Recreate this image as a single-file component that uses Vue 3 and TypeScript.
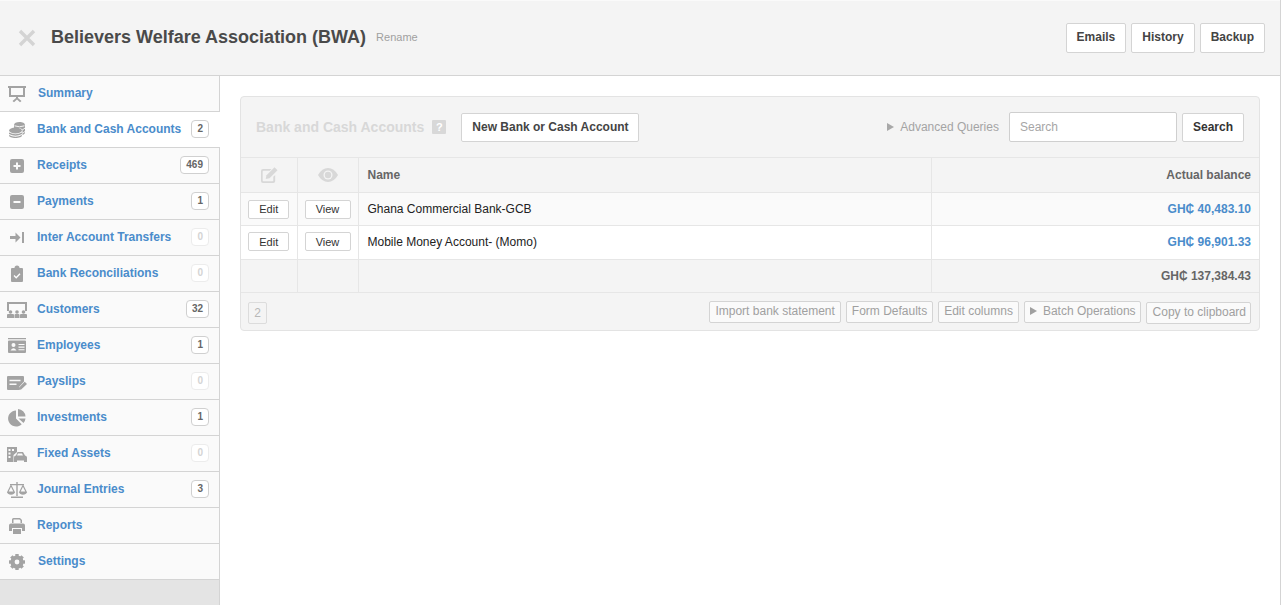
<script setup lang="ts">
interface NavItem { label: string; icon: string; count?: number; active?: boolean; x: number }
const nav: NavItem[] = [
  { label: 'Summary', icon: 'summary', x: 1 },
  { label: 'Bank and Cash Accounts', icon: 'coins', count: 2, active: true, x: 0 },
  { label: 'Receipts', icon: 'plus', count: 469, x: 0 },
  { label: 'Payments', icon: 'minus', count: 1, x: 0 },
  { label: 'Inter Account Transfers', icon: 'transfer', count: 0, x: 0 },
  { label: 'Bank Reconciliations', icon: 'clip', count: 0, x: 0 },
  { label: 'Customers', icon: 'customers', count: 32, x: 0 },
  { label: 'Employees', icon: 'card', count: 1, x: 0 },
  { label: 'Payslips', icon: 'payslip', count: 0, x: 0 },
  { label: 'Investments', icon: 'pie', count: 1, x: 0 },
  { label: 'Fixed Assets', icon: 'assets', count: 0, x: 0 },
  { label: 'Journal Entries', icon: 'scale', count: 3, x: 0 },
  { label: 'Reports', icon: 'print', x: 0 },
  { label: 'Settings', icon: 'gear', x: 1 },
]
const accounts = [
  { name: 'Ghana Commercial Bank-GCB', balance: 'GH₵ 40,483.10' },
  { name: 'Mobile Money Account- (Momo)', balance: 'GH₵ 96,901.33' },
]
const tools = ['Import bank statement', 'Form Defaults', 'Edit columns']
</script>

<template>
  <div class="frame">
    <div class="page">
      <header class="top">
        <svg class="close" width="18" height="18" viewBox="0 0 18 18"><path d="M2 2l14 14M16 2L2 16" stroke="#d4d4d4" stroke-width="3.4" /></svg>
        <h1>Believers Welfare Association (BWA)</h1>
        <span class="rename">Rename</span>
        <div class="top-btns">
          <button class="btn">Emails</button>
          <button class="btn">History</button>
          <button class="btn">Backup</button>
        </div>
      </header>
      <div class="body">
        <nav class="side">
          <a v-for="item in nav" :key="item.label" class="row" :class="{ active: item.active }">
            <svg class="ico" width="21" height="20" viewBox="0 0 21 20" fill="#a3a3a3">
              <template v-if="item.icon === 'summary'">
                <path d="M1 2h18v2h-1v9H2V4H1zM4 4v7h12V4z" fill-rule="evenodd" />
                <path d="M9 13h2v1l3.500 3-1.500 1.300L10 15.500 7 18.300 5.500 17 9 14z" />
              </template>
              <template v-else-if="item.icon === 'coins'">
                <path d="M7 8.500V5c0-1.700 2.400-3 5.500-3S18 3.300 18 5v7.500c0 1-1 1.900-2.500 2.400V9.500C15 8.500 11 7.500 7 8.500z" />
                <path d="M7.500 5.800q5 2 10 0M15.500 9.600q1.500-.4 2.500-1.600M15.500 13q1.500-.4 2.500-1.600" fill="none" stroke="#fff" stroke-width=".9" />
                <ellipse cx="8.500" cy="10.500" rx="6.500" ry="2.900" />
                <path d="M2 12.500q6.500 3.600 13 0v1.500q-6.500 3.500-13 0zM2 15q6.500 3.500 13 0v.5C15 17 12 18 8.500 18S2 17 2 15.500z" />
              </template>
              <template v-else-if="item.icon === 'plus'">
                <path d="M5 3h10a2 2 0 0 1 2 2v10a2 2 0 0 1-2 2H5a2 2 0 0 1-2-2V5a2 2 0 0 1 2-2zM9 6.500V9H6.500v2H9v2.500h2V11h2.500V9H11V6.500z" fill-rule="evenodd" />
              </template>
              <template v-else-if="item.icon === 'minus'">
                <path d="M5 3h10a2 2 0 0 1 2 2v10a2 2 0 0 1-2 2H5a2 2 0 0 1-2-2V5a2 2 0 0 1 2-2zM6.500 9v2h7V9z" fill-rule="evenodd" />
              </template>
              <template v-else-if="item.icon === 'transfer'">
                <path d="M3 8h5.500V4.500L13.500 9.500l-5 5V11H3zM15 4h2v11h-2z" />
              </template>
              <template v-else-if="item.icon === 'clip'">
                <path d="M5 4h2.500a2.500 2.500 0 0 1 5 0H15a1 1 0 0 1 1 1v12a1 1 0 0 1-1 1H5a1 1 0 0 1-1-1V5a1 1 0 0 1 1-1z" />
                <path d="M7 11.500l2.200 2.200 3.800-4" fill="none" stroke="#fff" stroke-width="1.300" />
              </template>
              <template v-else-if="item.icon === 'customers'">
                <path d="M0 2h20v9h-2V4H2v7H0z" />
                <circle cx="3.500" cy="12" r="1.800" /><circle cx="10" cy="12" r="1.800" /><circle cx="16.500" cy="12" r="1.800" />
                <path d="M0 15q0-1 1-1h5q1 0 1 1v3H0zM7.500 15q0-1 1-1h3q1 0 1 1v3h-5zM13 15q0-1 1-1h5q1 0 1 1v3h-7z" />
              </template>
              <template v-else-if="item.icon === 'card'">
                <path d="M1 2h18v1.300H1zM2 4.500h16a1 1 0 0 1 1 1V16a1 1 0 0 1-1 1H2a1 1 0 0 1-1-1V5.500a1 1 0 0 1 1-1z" />
                <circle cx="6.500" cy="9" r="2" fill="#fafafa" />
                <path d="M3.500 14.500q3-4.500 6 0zM11.500 8h6v1.100h-6zM11.500 10.600h6v1.100h-6zM11.500 13.200h6v1.100h-6z" fill="#fafafa" />
              </template>
              <template v-else-if="item.icon === 'payslip'">
                <path d="M1 4h15a1 1 0 0 1 1 1v4.500L12 15v3H1a1 1 0 0 1-1-1V5a1 1 0 0 1 1-1zM2.500 7.800v1.400h11V7.800zM2.500 11.500v1.400h7v-1.400z" fill-rule="evenodd" />
                <path d="M11.500 18l.6-2.600 5.600-5.600 2.300 2.200-5.800 5.600z" />
              </template>
              <template v-else-if="item.icon === 'pie'">
                <path d="M9 2.500V10.500l5.700 5.700A8 8 0 1 1 9 2.500z" />
                <path d="M11 1a8 8 0 0 1 7.500 7.500H11zM11.500 10.500h7a8 8 0 0 1-2 4.500z" />
              </template>
              <template v-else-if="item.icon === 'assets'">
                <path d="M0 3h10v5L6.500 11v7H0zM1.500 5v2h2V5zM5 5v2h2V5zM1.500 8.500v2h2v-2zM1.500 12v2h2v-2z" fill-rule="evenodd" />
                <path d="M10.500 8h5.500l2 3.500q2 .3 2 2V18h-3v-1.500H10V18H7v-4.500q0-2 2-2zM11 9.500l-1 2h6l-1-2z" fill-rule="evenodd" />
              </template>
              <template v-else-if="item.icon === 'scale'">
                <path d="M9.300 2h1.400v14h-1.400zM3 4h14v1.300H3zM4 16.500h12V18H4z" />
                <path d="M4 5.500L.8 12h6.400zM16 5.500L12.800 12h6.400z" fill="none" stroke="#a3a3a3" stroke-width="1.200" />
                <path d="M0 12h8q-.8 2.800-4 2.800T0 12zM12 12h8q-.8 2.800-4 2.800T12 12z" />
              </template>
              <template v-else-if="item.icon === 'print'">
                <path d="M5 7V3.500A1.500 1.500 0 0 1 6.500 2H13l2 2v3h-1.500V4.500L12.500 3.500H6.500V7z" />
                <path d="M4 7.500h12a2 2 0 0 1 2 2V15h-3v-3H5v3H2V9.500a2 2 0 0 1 2-2zM6 13h8v5H6z" />
              </template>
              <template v-else>
                <g transform="translate(10 10)">
                  <circle r="4.800" fill="none" stroke="#a3a3a3" stroke-width="3.600" />
                  <rect v-for="deg in [0, 45, 90, 135]" :key="deg" x="-1.700" y="-8" width="3.400" height="16" :transform="`rotate(${deg})`" />
                  <circle r="2.400" fill="#fafafa" />
                </g>
              </template>
            </svg>
            <span class="lbl" :class="{ shift: item.x }">{{ item.label }}</span>
            <span v-if="item.count !== undefined" class="badge" :class="{ zero: item.count === 0 }">{{ item.count }}</span>
          </a>
          <div class="side-fill"></div>
        </nav>
        <main class="main">
          <section class="panel">
            <div class="panel-head">
              <h2>Bank and Cash Accounts</h2>
              <span class="help">?</span>
              <button class="btn new">New Bank or Cash Account</button>
              <span class="adv"><i class="tri"></i>Advanced Queries</span>
              <input class="search" placeholder="Search" />
              <button class="btn go">Search</button>
            </div>
            <table>
              <thead>
                <tr>
                  <th class="c1">
                    <svg width="18" height="18" viewBox="0 0 18 18" fill="#d8d8d8"><path d="M3 3h8.500L9.800 4.800H3.500a.8.800 0 0 0-.8.800v8.900c0 .5.300.8.800.8h9c.5 0 .8-.3.800-.8V10.700L15.200 9v6a2 2 0 0 1-2 2H3a2 2 0 0 1-2-2V5a2 2 0 0 1 2-2z" /><path d="M14.500 1.200l3 3-8 8-3.800.8.800-3.800z" /></svg>
                  </th>
                  <th class="c2">
                    <svg width="20" height="14" viewBox="0 0 20 14"><path d="M0 7q4-7 10-7t10 7q-4 7-10 7T0 7z" fill="#d8d8d8" /><circle cx="10" cy="7" r="4.500" fill="#f4f4f4" /><circle cx="10" cy="7" r="3.200" fill="#d8d8d8" /></svg>
                  </th>
                  <th class="name">Name</th>
                  <th class="amt">Actual balance</th>
                </tr>
              </thead>
              <tbody>
                <tr v-for="(a, i) in accounts" :key="a.name" :class="i === 0 ? 'odd' : 'even'">
                  <td class="c1"><button class="mini edit">Edit</button></td>
                  <td class="c2"><button class="mini view">View</button></td>
                  <td class="name">{{ a.name }}</td>
                  <td class="amt link">{{ a.balance }}</td>
                </tr>
                <tr class="total">
                  <td class="c1"></td><td class="c2"></td><td></td>
                  <td class="amt">GH₵ 137,384.43</td>
                </tr>
              </tbody>
            </table>
            <div class="panel-foot">
              <span class="pager">2</span>
              <div class="tools">
                <button v-for="t in tools" :key="t" class="tool">{{ t }}</button>
                <button class="tool batch"><i class="tri dark"></i>Batch Operations</button>
                <button class="tool copy">Copy to clipboard</button>
              </div>
            </div>
          </section>
        </main>
      </div>
    </div>
  </div>
</template>

<style>
html, body { margin: 0; background: #fff; }
</style>

<style scoped>
.frame { width: 1287px; height: 605px; overflow: hidden; background: #fff; }
.page { width: 1280px; height: 605px; border-right: 1px solid #d4d4d4; font-family: "Liberation Sans", Arial, sans-serif; display: flex; flex-direction: column; overflow: hidden; }
.top { height: 74px; flex: none; background: #f4f4f4; border-top: 1px solid #fafafa; border-bottom: 1px solid #d4d4d4; display: flex; align-items: center; padding: 0 15px 0 18px; }
.close { flex: none; }
h1 { margin: 0 0 2px 15px; font-size: 18px; font-weight: 700; color: #4a4a4a; line-height: 24px; }
.rename { margin: 0 0 2px 10px; font-size: 11px; color: #a0a0a0; }
.top-btns { margin-left: auto; display: flex; gap: 5px; }
.btn { height: 30px; box-sizing: border-box; background: #fff; border: 1px solid #d4d4d4; border-radius: 2px; padding: 0 10px 2px; font: 700 12px "Liberation Sans", Arial, sans-serif; color: #444; }
.body { flex: 1; display: flex; min-height: 0; }
.side { width: 219px; flex: none; border-right: 1px solid #d4d4d4; display: flex; flex-direction: column; background: #e4e4e4; }
.row { height: 35px; flex: none; display: flex; align-items: center; background: #fafafa; border-bottom: 1px solid #d4d4d4; padding: 0 10px 0 7px; }
.row.active { background: #fff; margin-right: -1px; padding-right: 11px; position: relative; }
.ico { flex: none; }
.lbl { margin: 0 0 2px 9px; font-size: 12px; font-weight: 700; color: #4a8ccb; }
.lbl.shift { margin-left: 10px; }
.badge { margin: 0 0 1px auto; min-width: 6px; height: 18px; line-height: 15px; box-sizing: border-box; padding: 0 5px; background: #fff; border: 1px solid #d0d0d0; border-radius: 4px; font-size: 10px; font-weight: 700; color: #666; text-align: center; }
.badge.zero { color: #d4d4d4; border-color: #ececec; }
.side-fill { flex: 1; }
.main { flex: 1; padding: 20px 20px 0 20px; min-width: 0; }
.panel { box-sizing: border-box; height: 235px; border: 1px solid #e3e3e3; border-radius: 4px; background: #f4f4f4; overflow: hidden; }
.panel-head { height: 60px; display: flex; align-items: center; padding: 0 15px; }
h2 { margin: 0; font-size: 14px; font-weight: 700; color: #d8d8d8; }
.help { margin-left: 8px; width: 14px; height: 14px; background: #d8d8d8; color: #fff; border-radius: 1px; font-size: 11px; font-weight: 700; line-height: 14px; text-align: center; }
.new { margin-left: 15px; height: 29px; padding: 0 9px 0 10px; }
.adv { margin-left: auto; font-size: 12px; color: #a4a4a4; display: flex; align-items: center; }
.tri { display: inline-block; width: 0; height: 0; border-left: 7px solid #a8a8a8; border-top: 4px solid transparent; border-bottom: 4px solid transparent; margin-right: 6px; }
.tri.dark { border-left-color: #a0a0a0; }
.search { margin-left: 10px; width: 168px; height: 30px; box-sizing: border-box; border: 1px solid #cfcfcf; border-radius: 2px; padding: 0 10px; font: 12px "Liberation Sans", Arial, sans-serif; background: #fff; outline: none; }
.search::placeholder { color: #a6a6a6; opacity: 1; }
.go { margin-left: 5px; height: 29px; padding-bottom: 0; color: #333; }
table { width: 100%; border-collapse: collapse; table-layout: fixed; font-size: 12px; }
th, td { border: 1px solid #e6e6e6; padding: 0 8px; height: 33px; box-sizing: border-box; }
th { height: 35px; background: #f4f4f4; color: #666; font-weight: 700; text-align: left; }
tr > :first-child { border-left: 0; }
tr > :last-child { border-right: 0; }
.c1 { width: 56px; padding: 0; text-align: center; }
.c2 { width: 61px; padding: 0; text-align: center; }
th svg { display: block; margin: 0 auto; }
.amt { width: 328px; text-align: right; }
.name { color: #222; padding-left: 9px; }
th.name { color: #666; }
.odd td { background: #fafafa; }
.even td { background: #fff; height: 34px; padding-bottom: 2px; }
.total td { background: #f4f4f4; color: #666; font-weight: 700; }
.link { color: #4a8ccb; font-weight: 700; }
.mini { height: 19px; box-sizing: border-box; background: #fff; border: 1px solid #d4d4d4; border-radius: 2px; padding: 0; font: 11px "Liberation Sans", Arial, sans-serif; color: #333; display: block; margin: 0 auto; }
.edit { width: 41px; }
.view { width: 46px; }
.panel-foot { height: 38px; display: flex; align-items: center; padding: 0 8px 0 7px; }
.pager { width: 19px; height: 22px; box-sizing: border-box; border: 1px solid #dcdcdc; border-radius: 2px; font-size: 12px; line-height: 20px; color: #b8b8b8; text-align: center; margin-top: 1px; }
.tools { margin-left: auto; display: flex; gap: 5px; align-items: flex-start; }
.tool { height: 22px; box-sizing: border-box; background: #fafafa; border: 1px solid #d4d4d4; border-radius: 2px; padding: 0 5px 2px; font: 12px "Liberation Sans", Arial, sans-serif; color: #a0a0a0; display: flex; align-items: center; white-space: nowrap; }
.batch { padding-right: 4px; }
.copy { margin-top: 1px; padding: 0 4px 2px 6px; }
</style>
